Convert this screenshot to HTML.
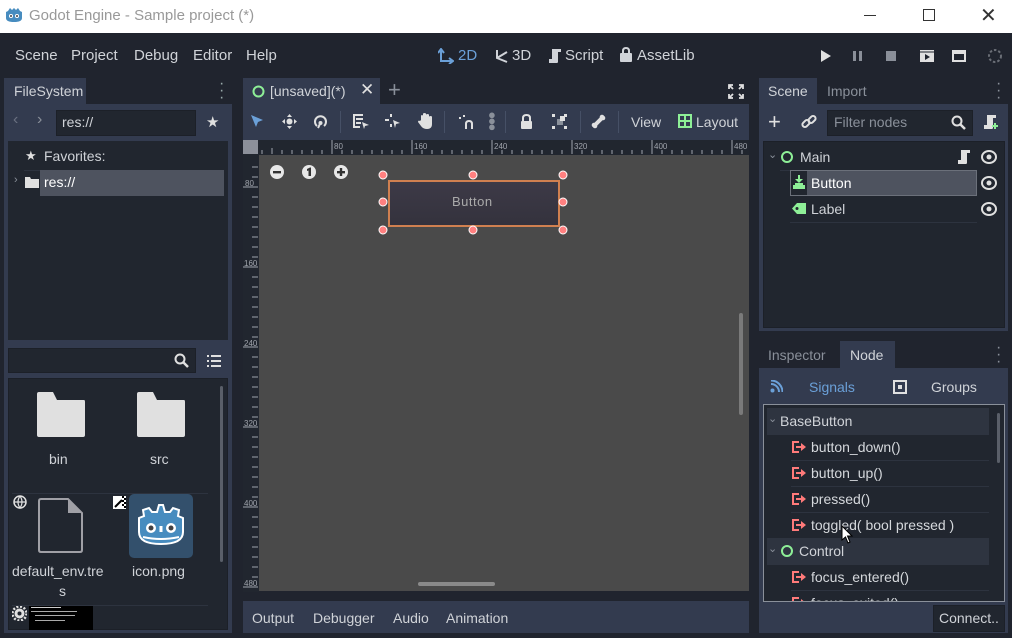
<!DOCTYPE html>
<html><head><meta charset="utf-8"><style>
*{box-sizing:border-box;margin:0;padding:0}
body{width:1012px;height:638px;overflow:hidden;background:#20242e;font-family:"Liberation Sans","DejaVu Sans",sans-serif;font-size:14px;color:#d0d3d8;position:relative}
.a{position:absolute}
.t{position:absolute;white-space:nowrap}
.panel{background:#333b4f}
.dark{background:#21262f}
.row{position:absolute;height:25px;line-height:25px}
.sig{color:#d5d8dc}
</style></head><body>
<!-- title bar -->
<div class="a" style="left:0;top:0;width:1012px;height:33px;background:#fff"></div>
<svg class="a" style="left:5px;top:6px" width="18" height="18" viewBox="0 0 18 18"><path d="M3 5 L5 2 L7 4 L9 2 L11 4 L13 2 L15 5 L17 6 L17 12 Q17 16 9 16 Q1 16 1 12 L1 6 Z" fill="#478cbf"/><circle cx="6" cy="10" r="2" fill="#fff"/><circle cx="12" cy="10" r="2" fill="#fff"/><circle cx="6" cy="10" r="1" fill="#414042"/><circle cx="12" cy="10" r="1" fill="#414042"/></svg>
<div class="t" style="left:29px;top:7px;font-size:15px;color:#999">Godot Engine - Sample project (*)</div>
<div class="a" style="left:864px;top:15px;width:12px;height:1px;background:#333"></div>
<div class="a" style="left:923px;top:9px;width:12px;height:12px;border:1px solid #333"></div>
<div class="t" style="left:980px;top:3px;font-size:20px;color:#333">✕</div>
<!-- menu -->
<div class="t" style="left:15px;top:47px;font-size:15px">Scene</div>
<div class="t" style="left:71px;top:47px;font-size:15px">Project</div>
<div class="t" style="left:134px;top:47px;font-size:15px">Debug</div>
<div class="t" style="left:193px;top:47px;font-size:15px">Editor</div>
<div class="t" style="left:246px;top:47px;font-size:15px">Help</div>
<svg class="a" style="left:438px;top:48px" width="16" height="16"><path d="M3 2 V13 H14" stroke="#6ba0d8" stroke-width="2" fill="none"/><path d="M0 5 L3 1 L6 5 M11 10 L15 13 L11 16" stroke="#6ba0d8" stroke-width="2" fill="none"/></svg>
<div class="t" style="left:458px;top:47px;font-size:15px;color:#6ba0d8">2D</div>
<svg class="a" style="left:494px;top:48px" width="16" height="16"><path d="M3 2 V10 L13 14 M3 10 L13 4" stroke="#d0d3d8" stroke-width="2" fill="none"/></svg>
<div class="t" style="left:512px;top:47px;font-size:15px">3D</div>
<svg class="a" style="left:548px;top:48px" width="14" height="16"><path d="M4 1 H13 V4 H10 V14 Q10 15 8 15 H1 V11 H4 Z" fill="#d0d3d8"/></svg>
<div class="t" style="left:565px;top:47px;font-size:15px">Script</div>
<svg class="a" style="left:619px;top:47px" width="14" height="16"><path d="M4 6 V4 Q4 1 7 1 Q10 1 10 4 V6" stroke="#d0d3d8" stroke-width="2" fill="none"/><rect x="1" y="6" width="12" height="9" rx="1" fill="#d0d3d8"/></svg>
<div class="t" style="left:637px;top:47px;font-size:15px">AssetLib</div>
<svg class="a" style="left:820px;top:49px" width="12" height="14"><path d="M1 1 L11 7 L1 13Z" fill="#e0e0e0"/></svg>
<div class="a" style="left:853px;top:51px;width:3px;height:10px;background:#8a8f99"></div><div class="a" style="left:859px;top:51px;width:3px;height:10px;background:#8a8f99"></div>
<div class="a" style="left:886px;top:51px;width:10px;height:10px;background:#8a8f99"></div>
<svg class="a" style="left:919px;top:49px" width="16" height="14"><rect x="1" y="1" width="14" height="12" fill="#e0e0e0"/><path d="M6 5 L11 8 L6 11Z" fill="#20242e"/><path d="M1 3 H15" stroke="#20242e" stroke-width="1"/></svg>
<svg class="a" style="left:951px;top:49px" width="16" height="14"><rect x="1" y="1" width="14" height="12" fill="#e0e0e0"/><rect x="3" y="5" width="10" height="6" fill="#20242e"/></svg>
<svg class="a" style="left:987px;top:48px" width="16" height="16"><circle cx="8" cy="8" r="6" stroke="#6a6e76" stroke-width="2" stroke-dasharray="2.5 2" fill="none"/></svg>

<!-- LEFT DOCK -->
<div class="a panel" style="left:4px;top:78px;width:82px;height:27px"></div>
<div class="t" style="left:14px;top:83px">FileSystem</div>
<div class="t" style="left:219px;top:80px;color:#9aa;font-size:16px;line-height:7px">·<br>·<br>·</div>
<div class="a panel" style="left:4px;top:104px;width:228px;height:529px"></div>
<div class="t" style="left:13px;top:111px;color:#6a7080;font-size:16px">‹</div>
<div class="t" style="left:37px;top:111px;color:#8a909a;font-size:16px">›</div>
<div class="a dark" style="left:56px;top:110px;width:140px;height:26px;border:1px solid #1c2028"></div>
<div class="t" style="left:62px;top:114px">res://</div>
<div class="t" style="left:206px;top:113px;font-size:15px;color:#e0e0e0">★</div>
<div class="a dark" style="left:8px;top:141px;width:220px;height:199px"></div>
<div class="t" style="left:25px;top:148px;color:#e0e0e0;font-size:13px">★</div>
<div class="t" style="left:44px;top:148px">Favorites:</div>
<div class="a" style="left:24px;top:170px;width:200px;height:1px;background:#2d333f"></div>
<div class="a" style="left:40px;top:170px;width:184px;height:26px;background:#4e535f"></div>
<div class="t" style="left:14px;top:174px;color:#8a909a;font-size:11px">›</div>
<svg class="a" style="left:25px;top:176px" width="14" height="12"><path d="M0 1 H5 L6 3 H14 V12 H0Z" fill="#e0e0e0"/></svg>
<div class="t" style="left:44px;top:174px;color:#fff">res://</div>
<div class="a dark" style="left:8px;top:348px;width:188px;height:25px;border:1px solid #1c2028"></div>
<svg class="a" style="left:174px;top:353px" width="15" height="15"><circle cx="6" cy="6" r="4.5" stroke="#e0e0e0" stroke-width="2" fill="none"/><path d="M9 9 L14 14" stroke="#e0e0e0" stroke-width="2.5"/></svg>
<svg class="a" style="left:207px;top:354px" width="15" height="14"><g fill="#e0e0e0"><rect x="0" y="1" width="2" height="2"/><rect x="0" y="6" width="2" height="2"/><rect x="0" y="11" width="2" height="2"/><rect x="4" y="1" width="10" height="2"/><rect x="4" y="6" width="10" height="2"/><rect x="4" y="11" width="10" height="2"/></g></svg>
<div class="a dark" style="left:8px;top:378px;width:220px;height:252px;border:1px solid #1c2028"></div>
<div class="a" style="left:220px;top:386px;width:3px;height:176px;background:#5a5f69;border-radius:2px"></div>
<svg class="a" style="left:37px;top:392px" width="48" height="45"><path d="M2 0 H16 L20 8 H47 Q48 8 48 10 V43 Q48 45 46 45 H2 Q0 45 0 43 V2 Q0 0 2 0Z" fill="#e0e0e0"/></svg>
<svg class="a" style="left:137px;top:392px" width="48" height="45"><path d="M2 0 H16 L20 8 H47 Q48 8 48 10 V43 Q48 45 46 45 H2 Q0 45 0 43 V2 Q0 0 2 0Z" fill="#e0e0e0"/></svg>
<div class="t" style="left:49px;top:451px">bin</div>
<div class="t" style="left:150px;top:451px">src</div>
<div class="a" style="left:12px;top:493px;width:196px;height:1px;background:#2d333f"></div>
<svg class="a" style="left:12px;top:494px" width="16" height="16"><circle cx="8" cy="8" r="6" stroke="#e0e0e0" stroke-width="1.5" fill="none"/><path d="M2 8 H14 M8 2 Q4 8 8 14 Q12 8 8 2" stroke="#e0e0e0" stroke-width="1.2" fill="none"/></svg>
<svg class="a" style="left:38px;top:498px" width="46" height="56"><path d="M3 1 H30 L44 15 V52 Q44 54 42 54 H3 Q1 54 1 52 V3 Q1 1 3 1Z" stroke="#a0a0a6" stroke-width="2" fill="none"/><path d="M30 1 V15 H44Z" fill="#a0a0a6"/></svg>
<div class="t" style="left:12px;top:563px">default_env.tre</div>
<div class="t" style="left:59px;top:583px">s</div>
<svg class="a" style="left:113px;top:496px" width="13" height="13"><rect width="13" height="13" fill="#fff"/><path d="M2 11 L9 4" stroke="#000" stroke-width="2"/><g fill="#000"><rect x="9" y="0" width="2" height="2"/><rect x="11" y="2" width="2" height="2"/><rect x="9" y="4" width="2" height="2"/><rect x="11" y="6" width="2" height="2"/><rect x="9" y="8" width="2" height="2"/><rect x="11" y="10" width="2" height="2"/></g></svg>
<div class="a" style="left:129px;top:494px;width:64px;height:64px;background:#33506c;border-radius:5px"></div>
<svg class="a" style="left:135px;top:500px" width="52" height="52" viewBox="0 0 52 52"><path d="M9 16 L8 10 L14 8 L17 12 H22 L24 5 H28 L30 12 H35 L38 8 L44 10 L43 16 L48 18 V32 Q48 44 26 44 Q4 44 4 32 V18Z" fill="#478cbf" stroke="#fff" stroke-width="2"/><circle cx="16" cy="28" r="5" fill="#fff"/><circle cx="36" cy="28" r="5" fill="#fff"/><circle cx="16" cy="28" r="2.5" fill="#414042"/><circle cx="36" cy="28" r="2.5" fill="#414042"/><rect x="24.5" y="26" width="3" height="6" fill="#fff"/><path d="M8 37 Q26 41 44 37" stroke="#fff" stroke-width="2" fill="none"/></svg>
<div class="t" style="left:132px;top:563px">icon.png</div>
<div class="a" style="left:12px;top:605px;width:196px;height:1px;background:#2d333f"></div>
<svg class="a" style="left:12px;top:606px" width="15" height="15"><circle cx="7.5" cy="7.5" r="5" fill="#e0e0e0"/><circle cx="7.5" cy="7.5" r="7" stroke="#e0e0e0" stroke-width="2.5" stroke-dasharray="2 1.7" fill="none"/><circle cx="7.5" cy="7.5" r="2" fill="#21262f"/></svg>
<div class="a" style="left:29px;top:606px;width:64px;height:24px;background:#000"></div>
<div class="a" style="left:31px;top:607px;width:30px;height:1px;background:#ccc"></div>
<div class="a" style="left:31px;top:611px;width:46px;height:1px;background:#aaa"></div>
<div class="a" style="left:35px;top:615px;width:40px;height:1px;background:#aaa"></div>
<div class="a" style="left:35px;top:620px;width:30px;height:1px;background:#aaa"></div>

<!-- CENTER -->
<div class="a panel" style="left:243px;top:78px;width:137px;height:27px"></div>
<svg class="a" style="left:252px;top:85px" width="13" height="13"><circle cx="6.5" cy="6.5" r="5" stroke="#8eef97" stroke-width="2" fill="none"/></svg>
<div class="t" style="left:270px;top:83px">[unsaved](*)</div>
<div class="t" style="left:360px;top:80px;font-size:17px;color:#e0e0e0">✕</div>
<div class="t" style="left:388px;top:77px;font-size:22px;color:#8a909a">+</div>
<svg class="a" style="left:728px;top:84px" width="16" height="15"><g stroke="#e0e0e0" stroke-width="1.8" fill="none"><path d="M1 5 V1 H5 M1 1 L5 5"/><path d="M11 1 H15 V5 M15 1 L11 5"/><path d="M1 10 V14 H5 M1 14 L5 10"/><path d="M15 10 V14 H11 M15 14 L11 10"/></g></svg>
<div class="a panel" style="left:243px;top:104px;width:506px;height:36px"></div>
<svg class="a" style="left:250px;top:114px" width="14" height="14"><path d="M1 1 L13 6 L8 8 L6 13Z" fill="#6ba0d8"/></svg>
<svg class="a" style="left:282px;top:114px" width="15" height="15"><g fill="#e0e0e0"><path d="M7.5 0 L10 3 H5Z M7.5 15 L10 12 H5Z M0 7.5 L3 5 V10Z M15 7.5 L12 5 V10Z"/><circle cx="7.5" cy="7.5" r="3"/></g></svg>
<svg class="a" style="left:313px;top:114px" width="15" height="15"><path d="M4 12 A5.5 5.5 0 1 1 11 12" stroke="#e0e0e0" stroke-width="2" fill="none"/><circle cx="7.5" cy="9" r="2" fill="#e0e0e0"/><path d="M7.5 9 L5 14" stroke="#e0e0e0" stroke-width="2"/></svg>
<div class="a" style="left:340px;top:111px;width:1px;height:22px;background:#465066"></div>
<svg class="a" style="left:353px;top:114px" width="16" height="15"><g fill="#e0e0e0"><rect x="0" y="0" width="2" height="14"/><rect x="0" y="0" width="10" height="2"/><rect x="3" y="4" width="7" height="2"/><rect x="3" y="8" width="5" height="2"/><rect x="0" y="12" width="7" height="2"/><path d="M9 8 L16 11 L12 12 L11 15Z"/></g></svg>
<svg class="a" style="left:385px;top:114px" width="16" height="15"><g fill="#e0e0e0"><rect x="5" y="0" width="2" height="3"/><rect x="0" y="5" width="4" height="2"/><rect x="5" y="10" width="2" height="3"/><path d="M8 6 L15 9 L11 10 L10 14Z"/></g></svg>
<svg class="a" style="left:418px;top:113px" width="15" height="16"><path d="M3 7 V3 Q3 2 4 2 Q5 2 5 3 V1 Q5 0 6.5 0 Q8 0 8 1 V2 Q8 1 9.5 1 Q11 1 11 2 V4 Q11 3 12.5 3 Q14 3 14 4 V11 Q14 16 9 16 Q5 16 3 13 L0 9 Q0 7 2 8Z" fill="#e0e0e0"/></svg>
<div class="a" style="left:444px;top:111px;width:1px;height:22px;background:#465066"></div>
<svg class="a" style="left:459px;top:115px" width="15" height="14"><g fill="#e0e0e0"><rect x="0" y="2" width="2" height="2"/><rect x="4" y="0" width="2" height="2"/><path d="M6 14 V9 Q6 5 10 5 Q14 5 14 9 V14 H12 V9 Q12 7 10 7 Q8 7 8 9 V14Z"/></g></svg>
<div class="t" style="left:488px;top:112px;color:#8a909a;font-size:13px;line-height:6px">●<br>●<br>●</div>
<div class="a" style="left:505px;top:111px;width:1px;height:22px;background:#465066"></div>
<svg class="a" style="left:520px;top:114px" width="13" height="15"><path d="M3 7 V4 Q3 1 6.5 1 Q10 1 10 4 V7" stroke="#e0e0e0" stroke-width="2" fill="none"/><rect x="1" y="7" width="11" height="8" rx="1" fill="#e0e0e0"/></svg>
<svg class="a" style="left:552px;top:114px" width="15" height="15"><g fill="#e0e0e0"><rect x="0" y="0" width="3" height="3"/><rect x="12" y="0" width="3" height="3"/><rect x="0" y="12" width="3" height="3"/><rect x="12" y="12" width="3" height="3"/><rect x="5" y="5" width="6" height="6" fill="#8a909a"/><rect x="8" y="2" width="5" height="5"/></g></svg>
<div class="a" style="left:580px;top:111px;width:1px;height:22px;background:#465066"></div>
<svg class="a" style="left:591px;top:114px" width="15" height="15"><path d="M3 12 L12 3" stroke="#e0e0e0" stroke-width="4"/><circle cx="3" cy="11" r="2.3" fill="#e0e0e0"/><circle cx="4" cy="12" r="2.3" fill="#e0e0e0"/><circle cx="11" cy="3" r="2.3" fill="#e0e0e0"/><circle cx="12" cy="4" r="2.3" fill="#e0e0e0"/></svg>
<div class="a" style="left:618px;top:111px;width:1px;height:22px;background:#465066"></div>
<div class="t" style="left:631px;top:114px">View</div>
<svg class="a" style="left:678px;top:114px" width="14" height="14"><rect x="1" y="1" width="12" height="12" stroke="#8eef97" stroke-width="2" fill="none"/><path d="M7 1 V13 M1 7 H13" stroke="#8eef97" stroke-width="2"/></svg>
<div class="t" style="left:696px;top:114px">Layout</div>
<!-- rulers -->
<div class="a dark" style="left:243px;top:140px;width:506px;height:15px"></div>
<div class="a dark" style="left:243px;top:140px;width:16px;height:452px"></div>
<div class="a" style="left:243px;top:140px;width:15px;height:14px;background:#8c909a"></div>
<svg class="a" style="left:243px;top:140px" width="506" height="452">
<g stroke="#a0a4ac" stroke-width="1">
<path d="M272 148V154M282 150V154M292 150V154M302 150V154M312 150V154M322 150V154M262 150V154M342 150V154M352 150V154M362 150V154M372 150V154M382 150V154M392 150V154M402 150V154M422 150V154M432 150V154M442 150V154M452 150V154M462 150V154M472 150V154M482 150V154M502 150V154M512 150V154M522 150V154M532 150V154M542 150V154M552 150V154M562 150V154M582 150V154M592 150V154M602 150V154M612 150V154M622 150V154M632 150V154M642 150V154M662 150V154M672 150V154M682 150V154M692 150V154M702 150V154M712 150V154M722 150V154M742 150V154" transform="translate(-243,-140)"/>
<path d="M332 140V154M412 140V154M492 140V154M572 140V154M652 140V154M732 140V154" transform="translate(-243,-140)"/>
<path d="M243 187H258M243 267H258M243 347H258M243 427H258M243 507H258M243 587H258" transform="translate(-243,-140)"/>
</g>
<g stroke="#a0a4ac" transform="translate(-243,-140)">
<path d="M252 167H258M252 177H258M252 197H258M252 207H258M252 217H258M252 227H258M252 237H258M252 247H258M252 257H258M252 277H258M252 287H258M252 297H258M252 307H258M252 317H258M252 327H258M252 337H258M252 357H258M252 367H258M252 377H258M252 387H258M252 397H258M252 407H258M252 417H258M252 437H258M252 447H258M252 457H258M252 467H258M252 477H258M252 487H258M252 497H258M252 517H258M252 527H258M252 537H258M252 547H258M252 557H258M252 567H258M252 577H258"/>
</g>
<g fill="#a0a4ac" font-size="8" font-family="Liberation Sans">
<text x="91" y="9">80</text><text x="171" y="9">160</text><text x="251" y="9">240</text><text x="331" y="9">320</text><text x="411" y="9">400</text><text x="491" y="9">480</text>
<text x="2" y="46">80</text><text x="1" y="126">160</text><text x="1" y="206">240</text><text x="1" y="286">320</text><text x="1" y="366">400</text><text x="1" y="446">480</text>
</g>
</svg>
<div class="a" style="left:259px;top:155px;width:490px;height:436px;background:#4a4a4a"></div>
<div class="a" style="left:739px;top:313px;width:4px;height:102px;background:#7a7a7a;border-radius:2px"></div>
<div class="a" style="left:418px;top:582px;width:77px;height:4px;background:#8a8a8a;border-radius:2px"></div>
<!-- zoom buttons -->
<svg class="a" style="left:269px;top:164px" width="90" height="16"><g fill="#e8e8e8"><circle cx="8" cy="8" r="7"/><circle cx="40" cy="8" r="7"/><circle cx="72" cy="8" r="7"/></g><g fill="#333"><rect x="4" y="7" width="8" height="2.4"/><rect x="68" y="7" width="8" height="2.4"/><rect x="70.8" y="4" width="2.4" height="8"/><path d="M38 5 L41 3.5 H42 V12 H39.5 V6.5 L38 7Z"/></g></svg>
<!-- button -->
<div class="a" style="left:388px;top:180px;width:172px;height:47px;border:2px solid #d08050;background:linear-gradient(#3d3a47,#34323d)"></div>
<div class="t" style="left:452px;top:194px;font-size:13px;color:#aaa;letter-spacing:0.5px">Button</div>
<svg class="a" style="left:377px;top:169px" width="194" height="68"><g fill="#ff8080" stroke="#fff" stroke-width="1"><circle cx="6" cy="6" r="4"/><circle cx="96" cy="6" r="4"/><circle cx="186" cy="6" r="4"/><circle cx="6" cy="33" r="4"/><circle cx="186" cy="33" r="4"/><circle cx="6" cy="61" r="4"/><circle cx="96" cy="61" r="4"/><circle cx="186" cy="61" r="4"/></g></svg>
<!-- bottom panel -->
<div class="a panel" style="left:243px;top:601px;width:506px;height:32px"></div>
<div class="t" style="left:252px;top:610px">Output</div>
<div class="t" style="left:313px;top:610px">Debugger</div>
<div class="t" style="left:393px;top:610px">Audio</div>
<div class="t" style="left:446px;top:610px">Animation</div>

<!-- RIGHT: Scene -->
<div class="a panel" style="left:759px;top:78px;width:58px;height:27px"></div>
<div class="t" style="left:768px;top:83px">Scene</div>
<div class="t" style="left:827px;top:83px;color:#8a909a">Import</div>
<div class="t" style="left:996px;top:80px;color:#8a909a;font-size:16px;line-height:7px">·<br>·<br>·</div>
<div class="a panel" style="left:759px;top:104px;width:249px;height:227px"></div>
<div class="t" style="left:768px;top:110px;font-size:22px;color:#e0e0e0;line-height:24px">+</div>
<svg class="a" style="left:801px;top:114px" width="16" height="16"><g stroke="#e0e0e0" stroke-width="2" fill="none"><rect x="1" y="7" width="8" height="5" rx="2.5" transform="rotate(-45 5 9.5)"/><rect x="7" y="3" width="8" height="5" rx="2.5" transform="rotate(-45 11 5.5)"/></g></svg>
<div class="a dark" style="left:827px;top:110px;width:146px;height:26px;border:1px solid #1c2028"></div>
<div class="t" style="left:834px;top:114px;color:#8a909a">Filter nodes</div>
<svg class="a" style="left:951px;top:115px" width="15" height="15"><circle cx="6" cy="6" r="4.5" stroke="#e0e0e0" stroke-width="2" fill="none"/><path d="M9 9 L14 14" stroke="#e0e0e0" stroke-width="2.5"/></svg>
<svg class="a" style="left:983px;top:114px" width="16" height="16"><path d="M4 1 H13 V4 H10 V14 Q10 15 8 15 H1 V11 H4 Z" fill="#e0e0e0"/><path d="M12 9 V15 M9 12 H15" stroke="#8eef97" stroke-width="2"/></svg>
<div class="a dark" style="left:763px;top:141px;width:242px;height:187px;border:1px solid #1c2028"></div>
<div class="t" style="left:768px;top:148px;color:#8a909a;font-size:11px">⌄</div>
<svg class="a" style="left:780px;top:150px" width="14" height="14"><circle cx="7" cy="7" r="5" stroke="#8eef97" stroke-width="2" fill="none"/></svg>
<div class="t" style="left:800px;top:149px">Main</div>
<svg class="a" style="left:957px;top:149px" width="14" height="16"><path d="M4 1 H13 V4 H10 V14 Q10 15 8 15 H1 V11 H4 Z" fill="#e0e0e0"/></svg>
<svg class="a" style="left:981px;top:150px" width="16" height="14"><ellipse cx="8" cy="7" rx="7" ry="6" stroke="#e0e0e0" stroke-width="2" fill="none"/><circle cx="8" cy="7" r="2.5" fill="#e0e0e0"/></svg>
<div class="a" style="left:780px;top:170px;width:197px;height:1px;background:#2d333f"></div>
<div class="a" style="left:790px;top:170px;width:187px;height:26px;background:#4e535f;border:1px solid #6b707a"></div>
<div class="a" style="left:791px;top:171px;width:16px;height:24px;background:#21262f"></div>
<svg class="a" style="left:792px;top:175px" width="14" height="15"><g fill="#8eef97"><rect x="6" y="0" width="2" height="6"/><path d="M3 4 H11 L7 8Z"/><rect x="1" y="10" width="12" height="4"/><rect x="3" y="8" width="8" height="2"/></g></svg>
<div class="t" style="left:811px;top:175px;color:#fff">Button</div>
<svg class="a" style="left:981px;top:176px" width="16" height="14"><ellipse cx="8" cy="7" rx="7" ry="6" stroke="#e0e0e0" stroke-width="2" fill="none"/><circle cx="8" cy="7" r="2.5" fill="#e0e0e0"/></svg>
<svg class="a" style="left:792px;top:203px" width="14" height="11"><path d="M5 0 H14 V11 H5 L0 5.5Z" fill="#8eef97"/><circle cx="5" cy="5.5" r="1.5" fill="#21262f"/></svg>
<div class="t" style="left:811px;top:201px">Label</div>
<svg class="a" style="left:981px;top:202px" width="16" height="14"><ellipse cx="8" cy="7" rx="7" ry="6" stroke="#e0e0e0" stroke-width="2" fill="none"/><circle cx="8" cy="7" r="2.5" fill="#e0e0e0"/></svg>
<div class="a" style="left:790px;top:222px;width:187px;height:1px;background:#2d333f"></div>

<!-- RIGHT: Node -->
<div class="t" style="left:768px;top:347px;color:#8a909a">Inspector</div>
<div class="a panel" style="left:840px;top:341px;width:55px;height:28px"></div>
<div class="t" style="left:850px;top:347px">Node</div>
<div class="t" style="left:996px;top:344px;color:#8a909a;font-size:16px;line-height:7px">·<br>·<br>·</div>
<div class="a panel" style="left:759px;top:368px;width:249px;height:265px"></div>
<svg class="a" style="left:770px;top:380px" width="13" height="13"><g fill="none" stroke="#6ba0d8" stroke-width="2"><path d="M1 4 A8 8 0 0 1 9 12"/><path d="M1 0.5 A11.5 11.5 0 0 1 12.5 12"/></g><circle cx="2.5" cy="10.5" r="2" fill="#6ba0d8"/></svg>
<div class="t" style="left:809px;top:379px;color:#6ba0d8">Signals</div>
<svg class="a" style="left:893px;top:380px" width="14" height="14"><rect x="1" y="1" width="12" height="12" stroke="#e0e0e0" stroke-width="2" fill="none"/><rect x="5" y="5" width="4" height="4" fill="#e0e0e0"/></svg>
<div class="t" style="left:931px;top:379px">Groups</div>
<div class="a dark" style="left:763px;top:404px;width:242px;height:198px;border:1px solid #8a909a"></div>
<div class="a" style="left:997px;top:413px;width:3px;height:50px;background:#5a5f69;border-radius:2px"></div>
<div class="a" style="left:767px;top:408px;width:222px;height:27px;background:#2e3440"></div>
<div class="t" style="left:768px;top:412px;color:#8a909a;font-size:11px">⌄</div>
<div class="t" style="left:780px;top:413px">BaseButton</div>
<div class="a" style="left:767px;top:538px;width:222px;height:27px;background:#2e3440"></div>
<div class="t" style="left:768px;top:542px;color:#8a909a;font-size:11px">⌄</div>
<svg class="a" style="left:780px;top:544px" width="14" height="14"><circle cx="7" cy="7" r="5" stroke="#8eef97" stroke-width="2" fill="none"/></svg>
<div class="t" style="left:799px;top:543px">Control</div>
<svg width="0" height="0" style="position:absolute"><defs><symbol id="sg" viewBox="0 0 14 12"><path d="M7 1 H1 V11 H7" stroke="#ff7a7a" stroke-width="2" fill="none"/><path d="M4 6 H10" stroke="#ff7a7a" stroke-width="2"/><path d="M9 2 L14 6 L9 10Z" fill="#ff7a7a"/></symbol></defs></svg>
<svg class="a" style="left:792px;top:441px" width="14" height="12"><use href="#sg"/></svg>
<div class="t sig" style="left:811px;top:439px">button_down()</div>
<div class="a" style="left:791px;top:460px;width:198px;height:1px;background:#2d333f"></div>
<svg class="a" style="left:792px;top:467px" width="14" height="12"><use href="#sg"/></svg>
<div class="t sig" style="left:811px;top:465px">button_up()</div>
<div class="a" style="left:791px;top:486px;width:198px;height:1px;background:#2d333f"></div>
<svg class="a" style="left:792px;top:493px" width="14" height="12"><use href="#sg"/></svg>
<div class="t sig" style="left:811px;top:491px">pressed()</div>
<div class="a" style="left:791px;top:512px;width:198px;height:1px;background:#2d333f"></div>
<svg class="a" style="left:792px;top:519px" width="14" height="12"><use href="#sg"/></svg>
<div class="t sig" style="left:811px;top:517px">toggled( bool pressed )</div>
<svg class="a" style="left:792px;top:571px" width="14" height="12"><use href="#sg"/></svg>
<div class="t sig" style="left:811px;top:569px">focus_entered()</div>
<div class="a" style="left:791px;top:590px;width:198px;height:1px;background:#2d333f"></div>
<div class="a" style="left:792px;top:597px;width:200px;height:4px;overflow:hidden"><div class="t sig" style="left:19px;top:-2px;">focus_exited()</div><svg class="a" style="left:0;top:0" width="14" height="12"><use href="#sg"/></svg></div>
<svg class="a" style="left:841px;top:525px" width="14" height="20"><path d="M1 1 V15 L4.5 12 L7 18 L9 17 L6.5 11 H11Z" fill="#fff" stroke="#000" stroke-width="1"/></svg>
<div class="a dark" style="left:933px;top:605px;width:72px;height:27px;border:1px solid #1c2028"></div>
<div class="t" style="left:939px;top:610px">Connect..</div>
</body></html>
